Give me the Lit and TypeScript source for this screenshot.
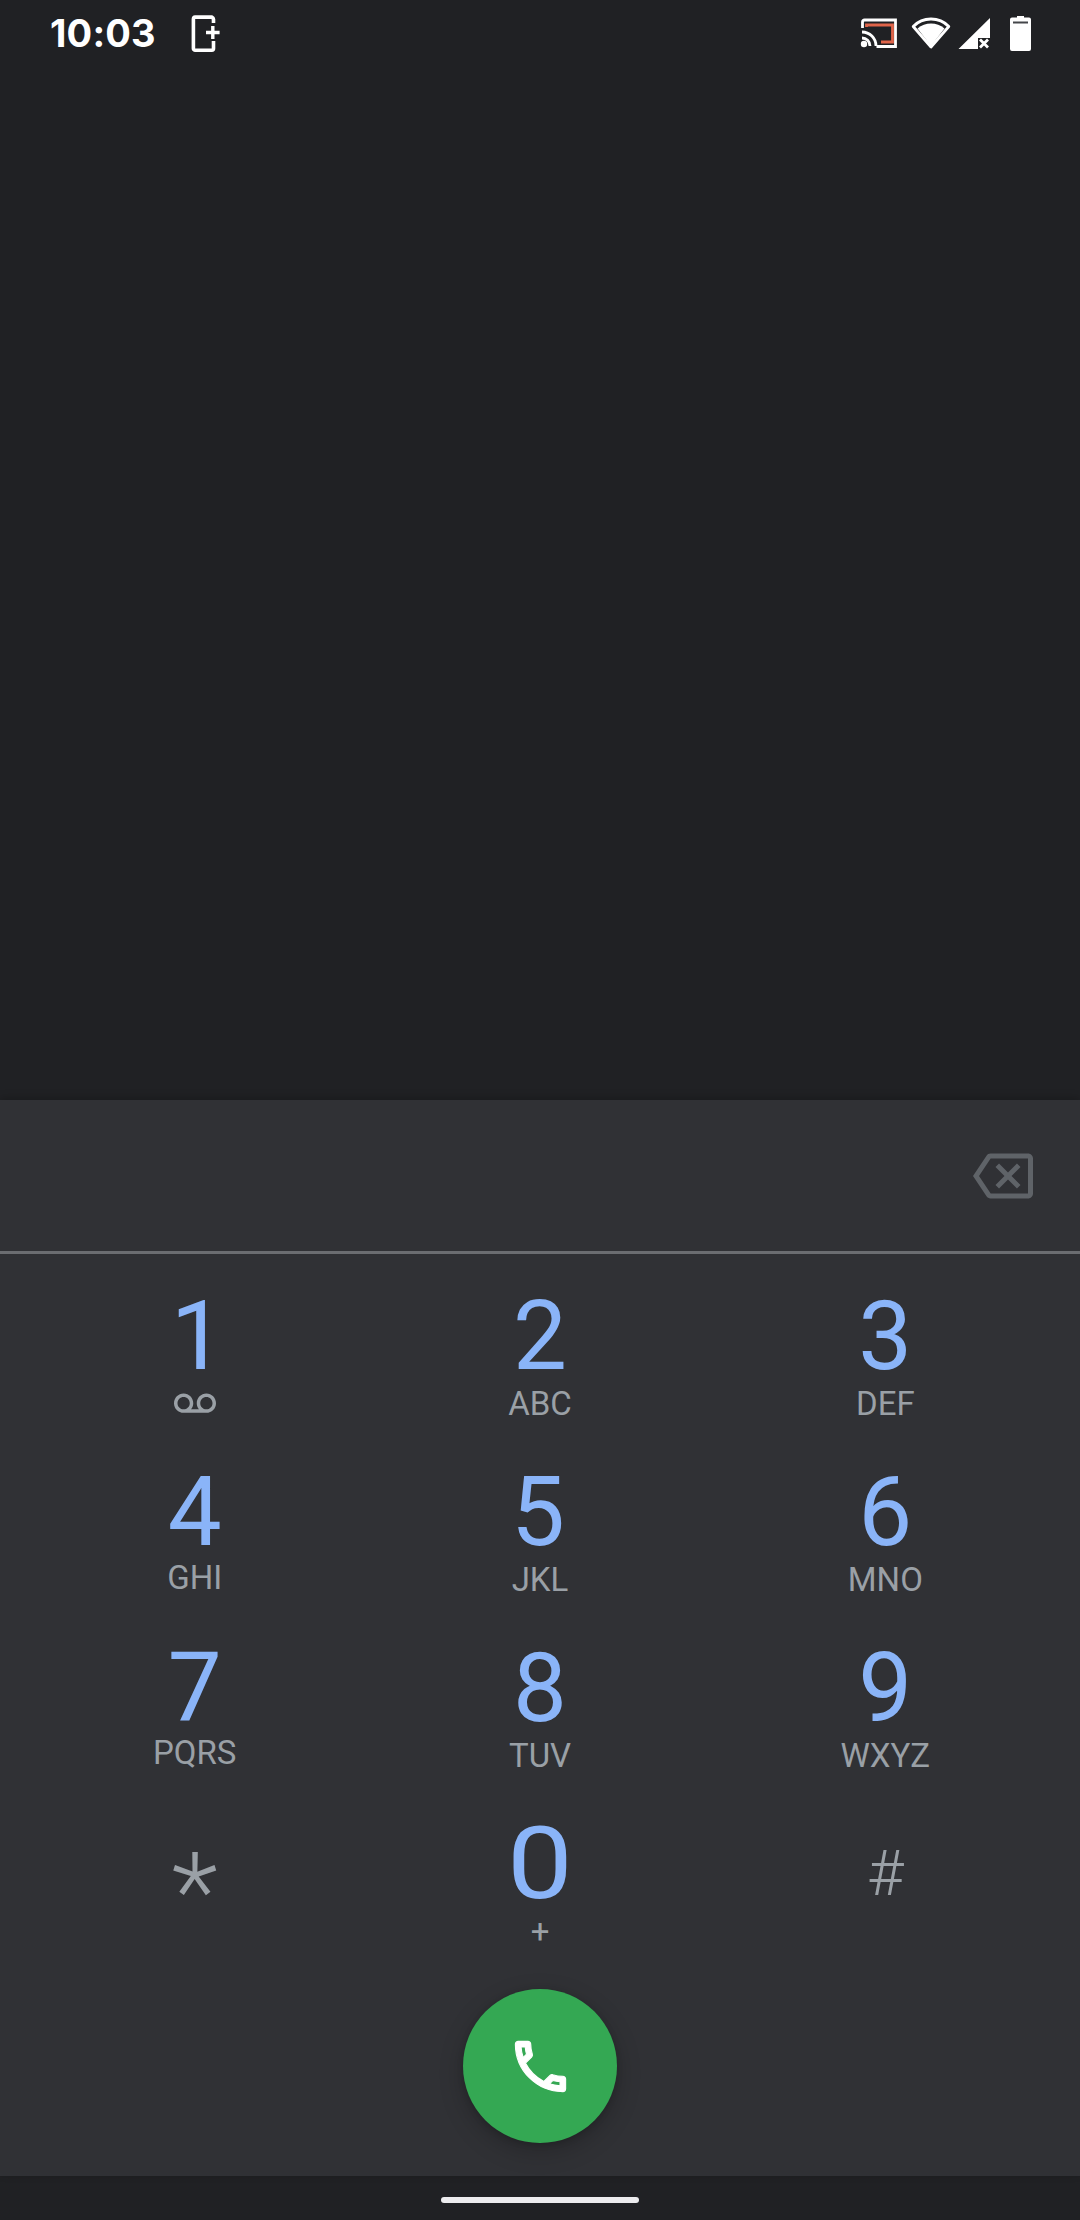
import { LitElement, html, css } from "lit";
import { customElement } from "lit/decorators.js";

const voicemail = html`<svg class="vm" viewBox="0 0 24 24" fill="currentColor"><path d="M18.5 6C15.46 6 13 8.46 13 11.5c0 1.33.47 2.55 1.26 3.5H9.74c.79-.95 1.26-2.17 1.26-3.5C11 8.46 8.54 6 5.5 6S0 8.46 0 11.5 2.46 17 5.5 17h13c3.04 0 5.5-2.46 5.5-5.5S21.54 6 18.5 6zm-13 9C3.57 15 2 13.43 2 11.5S3.57 8 5.5 8 9 9.57 9 11.5 7.43 15 5.5 15zm13 0c-1.93 0-3.5-1.57-3.5-3.5S16.57 8 18.5 8 22 9.57 22 11.5 20.43 15 18.5 15z"/></svg>`;

const keys: [string, string, string][] = [
  ["1", "vm", ""], ["2", "ABC", ""], ["3", "DEF", ""],
  ["4", "GHI", "up2"], ["5", "JKL", ""], ["6", "MNO", ""],
  ["7", "PQRS", "up3"], ["8", "TUV", ""], ["9", "WXYZ", ""],
  ["*", "", ""], ["0", "+", ""], ["#", "", ""],
];

@customElement("app-root")
export class AppRoot extends LitElement {
  static styles = css`
    :host { display: block; width: 1080px; height: 2220px; }
    .page { width: 1080px; height: 2220px; display: flex; flex-direction: column; background: #202124; font-family: Roboto, sans-serif; overflow: hidden; }
    .status { height: 66px; display: flex; align-items: center; padding: 0 49px 0 50px; color: #fff; flex: none; }
    .time { font-family: Inter, Roboto, sans-serif; font-size: 38px; font-weight: 700; line-height: 66px; width: 141px; letter-spacing: 0.2px; }
    .status svg { display: block; flex: none; }
    .spacer { flex: 1; }
    .empty { flex: 1; }
    .panel { height: 1076px; flex: none; background: #303135; display: flex; flex-direction: column; box-shadow: 0 -2px 8px rgba(0,0,0,.22); position: relative; }
    .entry { height: 151px; flex: none; border-bottom: 3px solid #6b6d71; display: flex; align-items: center; justify-content: flex-end; padding-right: 47px; }
    .entry svg { width: 60px; height: 60px; color: #5f6368; display: block; }
    .grid { display: grid; grid-template-columns: repeat(3, 1fr); grid-auto-rows: 176px; padding: 34px 22px 0; }
    .key { display: flex; flex-direction: column; align-items: center; }
    .digit { font-size: 96px; line-height: 96px; height: 96px; color: #8ab4f8; font-weight: 400; }
    .zero { transform: scale(1.22, 1.04); }
    .one { transform: translateX(3px); }
    .five { transform: translateX(-2px); }
    .label { font-size: 33px; line-height: 40px; height: 40px; color: #9aa0a6; display: flex; align-items: center; }
    .up2 { margin-top: -2px; }
    .up3 { margin-top: -3px; }
    .vm { width: 42px; height: 42px; display: block; }
    .sym { color: #9aa0a6; font-weight: 300; }
    .star { font-size: 108px; line-height: 96px; margin-top: 28px; }
    .hash { font-size: 63px; line-height: 96px; margin-top: 10px; }
    .call-row { display: flex; justify-content: center; position: absolute; left: 0; right: 0; top: 889px; }
    .call { width: 154px; height: 154px; border-radius: 50%; background: #34a853; display: flex; align-items: center; justify-content: center; box-shadow: 0 8px 24px rgba(0,0,0,.22), 0 2px 6px rgba(0,0,0,.14); }
    .call svg { width: 67px; height: 67px; color: #fff; display: block; }
    .call path { stroke: currentColor; stroke-width: 0.4; stroke-linejoin: round; }
    .nav { height: 44px; flex: none; background: #202124; display: flex; justify-content: center; padding-top: 21px; box-sizing: border-box; }
    .pill { width: 198px; height: 6px; border-radius: 3px; background: #ececee; }
    .m13 { margin-right: 13px; }
    .m6 { margin-right: 6px; }
    .m20 { margin-right: 20px; }
  `;

  private renderStatus() {
    return html`<div class="status">
      <span class="time">10:03</span>
      <svg width="30" height="40" viewBox="0 0 30 40" fill="none">
        <path d="M22.5 10V6.500a3 3 0 0 0-1.600-2.400H4.200A2 2 0 0 0 2.400 6v29.500a1.700 1.700 0 0 0 1.800 1.700h16.600a1.700 1.700 0 0 0 1.700-1.700V28" stroke="#fff" stroke-width="3.600" stroke-linejoin="round"/>
        <path d="M15 19.500h13.600M21.800 13v13" stroke="#fff" stroke-width="3.400"/>
      </svg>
      <span class="spacer"></span>
      <svg class="m13" width="38" height="32" viewBox="0 0 38 32" fill="none">
        <path d="M2.500 11V5a2 2 0 0 1 2-2h31v26.500H16.500" stroke="#fff" stroke-width="2.800"/>
        <path d="M6.500 10V8h26v17H21" stroke="#e0654a" stroke-width="2.800"/>
        <path d="M2 15a14 14 0 0 1 14 14M2 21a8 8 0 0 1 8 8" stroke="#fff" stroke-width="2.800"/>
        <circle cx="4" cy="27" r="3.200" fill="#fff"/>
      </svg>
      <svg class="m6" width="40" height="32" viewBox="0 0 40 32" fill="none">
        <path d="M2.200 9.500C7 4.500 13 2 20 2s13 2.500 17.800 7.500L20 30z" stroke="#fff" stroke-width="2.800" stroke-linejoin="round"/>
        <path d="M6.500 11.500C10.500 8 15 6.500 20 6.500s9.500 1.500 13.500 5L20 29z" fill="#fff"/>
      </svg>
      <svg class="m20" width="33" height="32" viewBox="0 0 33 32">
        <path d="M33 1v20H21v11H1.500z" fill="#fff"/>
        <path d="M23 22.500l8 8M31 22.500l-8 8" stroke="#fff" stroke-width="2.800"/>
      </svg>
      <svg width="21" height="36" viewBox="0 0 21 36">
        <path d="M7 2.500V1h7v1.500h5a2 2 0 0 1 2 2V34a2 2 0 0 1-2 2H2a2 2 0 0 1-2-2V4.500a2 2 0 0 1 2-2z" fill="#fff"/>
        <rect x="3" y="6.500" width="15" height="2" fill="#44464a"/>
      </svg>
    </div>`;
  }

  private renderKey(d: string, l: string, up: string) {
    if (d === "*") return html`<div class="key"><span class="digit sym star">*</span></div>`;
    if (d === "#") return html`<div class="key"><span class="digit sym hash">#</span></div>`;
    const cls = d === "0" ? "digit zero" : d === "1" ? "digit one" : d === "5" ? "digit five" : "digit";
    return html`<div class="key">
      <span class=${cls}>${d}</span>
      <span class="label ${up}">${l === "vm" ? voicemail : l}</span>
    </div>`;
  }

  render() {
    return html`<div class="page">
      ${this.renderStatus()}
      <div class="empty"></div>
      <div class="panel">
        <div class="entry">
          <svg viewBox="0 0 24 24" fill="currentColor"><path d="M22 3H7c-.69 0-1.230.35-1.590.88L0 12l5.410 8.110c.36.53.9.89 1.590.89h15c1.100 0 2-.9 2-2V5c0-1.100-.9-2-2-2zm0 16H7.070L2.400 12l4.660-7H22v14zM10.410 17L14 13.410 17.590 17 19 15.590 15.410 12 19 8.410 17.590 7 14 10.590 10.410 7 9 8.410 12.590 12 9 15.590z"/></svg>
        </div>
        <div class="grid">${keys.map(([d, l, up]) => this.renderKey(d, l, up))}</div>
        <div class="call-row">
          <div class="call">
            <svg viewBox="0 0 24 24" fill="currentColor"><path d="M6.540 5c.06.89.21 1.760.45 2.590l-1.200 1.200c-.41-1.200-.67-2.470-.76-3.790h1.510m9.860 12.020c.85.24 1.720.39 2.600.45v1.490c-1.320-.09-2.590-.35-3.800-.75l1.200-1.190M7.500 3H4c-.55 0-1 .45-1 1 0 9.390 7.610 17 17 17 .55 0 1-.45 1-1v-3.490c0-.55-.45-1-1-1-1.240 0-2.450-.2-3.570-.57-.1-.04-.21-.05-.31-.05-.26 0-.51.1-.71.29l-2.200 2.200c-2.830-1.450-5.150-3.760-6.590-6.590l2.200-2.200c.28-.28.36-.67.25-1.020C8.700 6.450 8.500 5.250 8.500 4c0-.55-.45-1-1-1z"/></svg>
          </div>
        </div>
      </div>
      <div class="nav"><div class="pill"></div></div>
    </div>`;
  }
}
